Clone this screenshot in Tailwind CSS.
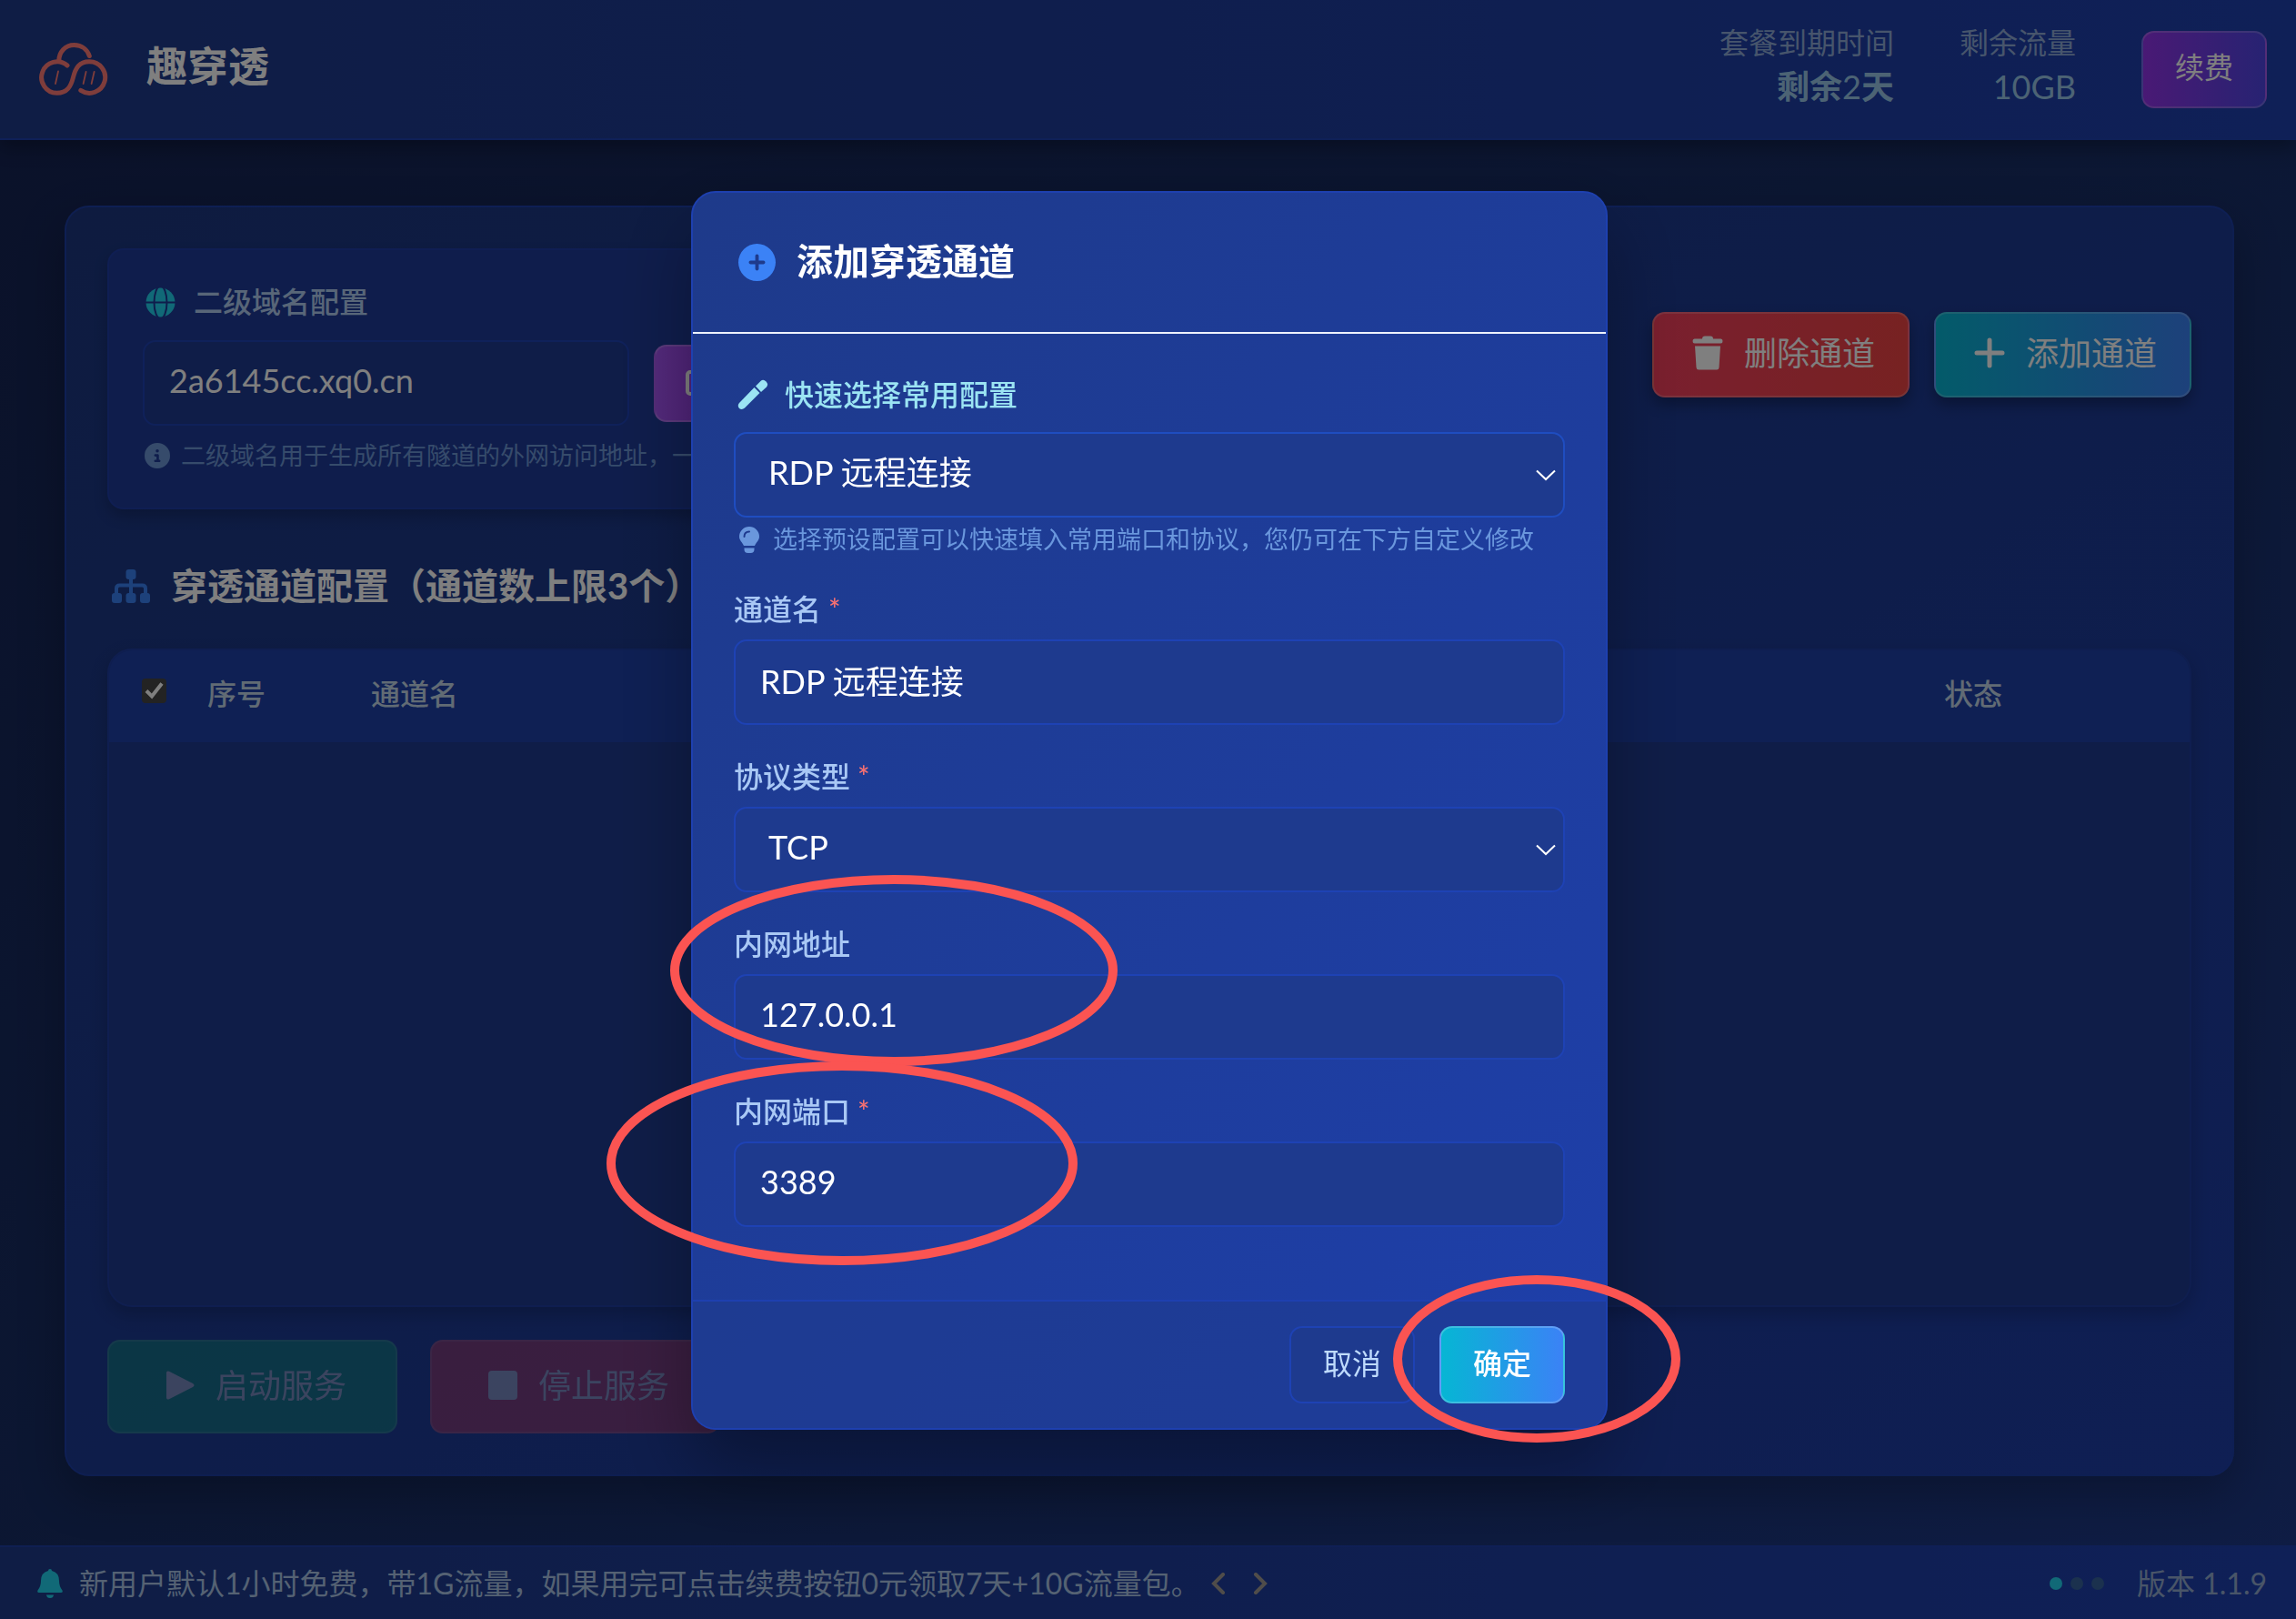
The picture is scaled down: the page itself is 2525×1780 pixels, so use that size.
<!DOCTYPE html>
<html lang="zh-CN">
<head>
    <meta charset="UTF-8">
    <meta name="viewport" content="width=device-width, initial-scale=1.0">
    <title>趣穿透</title>
    <script src="https://cdn.jsdelivr.net/npm/@tailwindcss/browser@4"></script>
</head>
<body class="font-[Lato,'Noto_Sans_CJK_SC',sans-serif] text-white">
<div class="min-h-screen flex flex-col bg-linear-to-br/srgb from-[#152352] via-[#182e66] to-[#1e3a8a]">
    <!-- 顶部栏 -->
    <header class="flex items-center h-[154px] pl-[42px] pr-8 bg-linear-to-r/srgb from-[#1e3a8a] to-[#1e40af] border-b-2 border-[#1e40af] shadow-[0_8px_20px_rgba(0,0,0,0.3)]">
        <svg class="w-[77px] h-[60px]" viewBox="42 46 77 60" fill="none" stroke="#ff7b76" stroke-width="5" stroke-linecap="round" aria-hidden="true">
            <path d="M64.8 67C64.8 57 72 49.6 81.5 49.6C90 49.6 96 54.500 98.300 61.500"/>
            <path d="M74 72A17.200 17.200 0 1 0 62.600 102.300C74 102.300 78 95 80.500 85C83 75 87 67.700 98 67.700A17.300 17.300 0 1 1 88.800 99.400"/>
            <g stroke-width="1.800">
                <path d="M64 78.500L61 92M94.600 79L91.600 92M103.600 79L100.600 92"/>
            </g>
        </svg>
        <h1 class="ml-[42px] pb-1.5 text-[45px] leading-[60px] font-bold">趣穿透</h1>
        <div class="flex items-center gap-[72px] ml-auto text-right">
            <div class="pb-2.5">
                <div class="text-[32px] leading-[48px] text-[#8fabd8]">套餐到期时间</div>
                <div class="text-[36px] leading-[48px] text-[#98c6e8]"><span class="font-bold">剩余</span>2<span class="font-bold">天</span></div>
            </div>
            <div class="pb-2.5">
                <div class="text-[32px] leading-[48px] text-[#8fabd8]">剩余流量</div>
                <div class="text-[36px] leading-[48px] text-[#98c6e8]">10GB</div>
            </div>
            <button class="h-[85px] px-[35px] pb-1 text-[32px] rounded-[14px] border-2 border-white/20 bg-linear-to-r/srgb from-[#9333ea] to-[#4f46e5]">续费</button>
        </div>
    </header>

    <main class="flex-1 flex flex-col pt-[72px] pb-[76px] pl-[71px] pr-[68px]">
        <div class="flex-1 flex flex-col p-[45px] rounded-[27px] border-2 border-[#1e40af]/70 bg-linear-to-br/srgb from-[#1c3780] to-[#1e3ea8] shadow-[0_20px_50px_rgba(0,0,0,0.25)]">
            <div class="flex items-start justify-between">
                <!-- 二级域名 -->
                <section class="w-[1400px] pt-9 pb-[39px] px-[37px] rounded-[18px] border-2 border-[#1e40af]/60 bg-[#1f3b98] shadow-[0_8px_16px_rgba(0,0,0,0.2)]">
                    <label for="domain" class="flex items-center gap-5 pl-[3px] text-[32px] leading-[42px] font-medium text-[#b0cdf0]">
                        <svg class="w-[33px] h-[33px]" viewBox="0 0 33 33" aria-hidden="true">
                            <mask id="globe-cut">
                                <rect width="33" height="33" fill="#fff"/>
                                <path d="M0 16.500H33" stroke="#000" stroke-width="2"/>
                                <ellipse cx="16.500" cy="16.500" rx="7" ry="18" fill="none" stroke="#000" stroke-width="2"/>
                            </mask>
                            <circle cx="16.500" cy="16.500" r="16" fill="#22d3ee" mask="url(#globe-cut)"/>
                        </svg>
                        二级域名配置
                    </label>
                    <div class="flex items-center gap-[27px] mt-[21px]">
                        <input id="domain" type="text" value="2a6145cc.xq0.cn" class="w-[535px] h-[94px] px-[27px] pb-1.5 text-[36px] rounded-[14px] border-2 border-[#1f42b4] bg-[#1e3a90]">
                        <button aria-label="复制" class="h-[85px] px-8 rounded-[14px] border-2 border-white/20 bg-linear-to-r/srgb from-[#a855f7] to-[#9333ea]">
                            <svg class="w-[36px] h-[36px]" viewBox="0 0 36 36" fill="none" stroke="currentColor" stroke-width="4" aria-hidden="true">
                                <rect x="3" y="6" width="19" height="24" rx="3"/>
                                <path d="M28 10V34H10"/>
                            </svg>
                        </button>
                    </div>
                    <p class="flex items-center gap-3 mt-[15px] pl-0.5 text-[27px] leading-9 text-[#6c96d6]">
                        <svg class="w-7 h-7" viewBox="0 0 512 512" fill="currentColor" aria-hidden="true"><path d="M256 512A256 256 0 1 0 256 0a256 256 0 1 0 0 512zM216 336h24V272H216c-13.300 0-24-10.700-24-24s10.700-24 24-24h48c13.300 0 24 10.700 24 24v88h8c13.300 0 24 10.700 24 24s-10.700 24-24 24H216c-13.300 0-24-10.700-24-24s10.700-24 24-24zm40-208a32 32 0 1 1 0 64 32 32 0 1 1 0-64z"/></svg>
                        二级域名用于生成所有隧道的外网访问地址，一
                    </p>
                </section>
                <div class="flex gap-[27px] mt-[70px] text-[36px]">
                    <button class="flex items-center gap-[23px] h-[94px] pl-[42px] pr-9 pb-1 rounded-[14px] border-2 border-white/20 bg-linear-to-r/srgb from-[#f43f5e] to-[#ef4444] shadow-[0_8px_16px_rgba(0,0,0,0.3)]">
                        <svg class="w-[34px] h-[38px]" viewBox="0 0 34 38" fill="currentColor" aria-hidden="true">
                            <path d="M11 3.500Q11 .500 14 .500H20Q23 .500 23 3.500H31.500Q33.500 3.500 33.500 6T31.500 8.500H2.500Q.500 8.500 .500 6T2.500 3.500Z"/>
                            <path d="M3 11.500H31L29.500 35Q29.300 37.500 27 37.500H7Q4.700 37.500 4.500 35Z"/>
                        </svg>
                        删除通道
                    </button>
                    <button class="flex items-center gap-[23px] h-[94px] pl-[42px] pr-9 pb-1 rounded-[14px] border-2 border-white/20 bg-linear-to-r/srgb from-[#06b6d4] to-[#3b82f6] shadow-[0_8px_16px_rgba(0,0,0,0.3)]">
                        <svg class="w-[34px] h-[34px]" viewBox="0 0 34 34" stroke="currentColor" stroke-width="5" stroke-linecap="round" aria-hidden="true"><path d="M17 3V31M3 17H31"/></svg>
                        添加通道
                    </button>
                </div>
            </div>

            <!-- 通道列表 -->
            <h2 class="flex items-center gap-[23px] mt-[60px] pl-[5px] text-[40px] leading-[48px] font-bold">
                <svg class="w-[42px] h-[37px] text-[#3b82f6]" viewBox="0 0 42 37" fill="currentColor" aria-hidden="true">
                    <rect x="15.500" y="0" width="11" height="11" rx="3"/>
                    <rect x="0" y="26" width="11" height="11" rx="3"/>
                    <rect x="15.500" y="26" width="11" height="11" rx="3"/>
                    <rect x="31" y="26" width="11" height="11" rx="3"/>
                    <path d="M21 9V28M5 28V21Q5 17.500 8.500 17.500H33.500Q37 17.500 37 21V28" fill="none" stroke="currentColor" stroke-width="4"/>
                </svg>
                穿透通道配置（通道数上限3个）
            </h2>
            <div class="flex-1 mt-[45px] rounded-[27px] border-2 border-[#1e40af]/50 overflow-hidden bg-[#1f3b90] shadow-[0_8px_20px_rgba(0,0,0,0.2)]">
                <table class="w-full table-fixed text-left text-[32px]">
                    <thead class="h-[101px] bg-[#1e40a8] text-[#c2d6e8]">
                        <tr>
                            <th class="w-[72px] pl-9 pb-3">
                                <span class="grid w-[27px] h-[27px]">
                                    <input type="checkbox" checked aria-label="全选" class="col-start-1 row-start-1 appearance-none w-[27px] h-[27px] rounded-[4px] bg-[#464646]">
                                    <svg class="col-start-1 row-start-1 w-[27px] h-[27px] pointer-events-none" viewBox="0 0 27 27" fill="none" stroke="#fff" stroke-width="4" aria-hidden="true"><path d="M5 13.500L11 19.500L22 5.500"/></svg>
                                </span>
                            </th>
                            <th class="w-[180px] pl-9 pb-1.5 font-medium">序号</th>
                            <th class="pl-9 pb-1.5 font-medium">通道名</th>
                            <th class="w-[306px] pl-9 pb-1.5 font-medium">状态</th>
                        </tr>
                    </thead>
                    <tbody></tbody>
                </table>
            </div>

            <div class="flex gap-9 mt-9 text-[36px]">
                <button disabled class="flex items-center gap-[23px] h-[103px] pl-[62px] pr-[54px] pb-1 rounded-[14px] border-2 border-white/20 bg-[#10b981] opacity-40">
                    <svg class="w-8 h-8" viewBox="0 0 32 32" fill="currentColor" aria-hidden="true"><path d="M1 2.500Q1 -.500 4 .800L30 14Q33 16 30 18L4 31.200Q1 32.500 1 29.500Z"/></svg>
                    启动服务
                </button>
                <button disabled class="flex items-center gap-[23px] h-[103px] pl-[62px] pr-[54px] pb-1 rounded-[14px] border-2 border-white/20 bg-[#f43f5e] opacity-40">
                    <svg class="w-8 h-8" viewBox="0 0 32 32" fill="currentColor" aria-hidden="true"><rect width="32" height="32" rx="4"/></svg>
                    停止服务
                </button>
            </div>
        </div>
    </main>

    <!-- 底部公告 -->
    <footer class="flex items-center h-[81px] pl-[41px] pr-8 border-t-2 border-[#1e40af]/70 bg-linear-to-r/srgb from-[#1e3a8a] to-[#1e40af] text-[32px] text-[#aac4e6]">
        <svg class="w-7 h-8 text-[#22d3ee]" viewBox="0 0 28 32" fill="currentColor" aria-hidden="true">
            <path d="M14 0Q16 0 16 2Q24 4 24 13Q24 19 27.500 23.500Q28.500 26 26 26H2Q-.500 26 .500 23.500Q4 19 4 13Q4 4 12 2Q12 0 14 0Z"/>
            <path d="M10 28.500H18Q17.500 32 14 32T10 28.500Z"/>
        </svg>
        <p class="ml-[18px]">新用户默认1小时免费，带1G流量，如果用完可点击续费按钮0元领取7天+10G流量包。</p>
        <div class="flex gap-[30px] ml-3 text-[#a09a94]">
            <button aria-label="上一条"><svg class="w-4 h-6" viewBox="0 0 16 24" fill="none" stroke="currentColor" stroke-width="4" stroke-linecap="round" aria-hidden="true"><path d="M13 2L3 12L13 22"/></svg></button>
            <button aria-label="下一条"><svg class="w-4 h-6" viewBox="0 0 16 24" fill="none" stroke="currentColor" stroke-width="4" stroke-linecap="round" aria-hidden="true"><path d="M3 2L13 12L3 22"/></svg></button>
        </div>
        <div class="flex gap-[9px] ml-auto">
            <span class="w-3.5 h-3.5 rounded-full bg-[#22d3ee]"></span>
            <span class="w-3.5 h-3.5 rounded-full bg-[#36629c]"></span>
            <span class="w-3.5 h-3.5 rounded-full bg-[#36629c]"></span>
        </div>
        <span class="ml-9 text-[#93abd0]">版本 1.1.9</span>
    </footer>
</div>

<!-- 添加通道弹窗 -->
<div class="fixed inset-0 flex items-center justify-center pl-[3px] pt-0.5 bg-black/50">
    <div role="dialog" aria-labelledby="modal-title" class="relative w-[1008px] rounded-[27px] border-2 border-[#1e40af] bg-linear-to-br/srgb from-[#1e3a8a] to-[#1e3faa] shadow-[0_40px_80px_rgba(0,0,0,0.3)]">
        <div class="flex items-center gap-[23px] h-[155px] pl-[50px] border-b-2 border-[#eef2ff]">
            <svg class="w-[41px] h-[41px] text-[#3b82f6]" viewBox="0 0 512 512" fill="currentColor" aria-hidden="true"><path d="M256 512A256 256 0 1 0 256 0a256 256 0 1 0 0 512zM232 344V280H168c-13.300 0-24-10.700-24-24s10.700-24 24-24h64V168c0-13.300 10.700-24 24-24s24 10.700 24 24v64h64c13.300 0 24 10.700 24 24s-10.700 24-24 24H280v64c0 13.300-10.700 24-24 24s-24-10.700-24-24z"/></svg>
            <h2 id="modal-title" class="pb-1 text-[40px] font-bold">添加穿透通道</h2>
        </div>

        <form class="px-[45px] pt-[45px] pb-20">
            <label for="preset" class="flex items-center gap-[18px] mb-5 pl-1 text-[32px] leading-[43px] font-medium text-[#9be4f3]">
                <svg class="w-[34px] h-[34px]" viewBox="0 0 34 34" fill="currentColor" aria-hidden="true">
                    <path d="M18.500 9L24.500 15L8 31.500Q5 34 2 32Q-.500 29 2 26Z"/>
                    <path d="M20 7.500L25.500 2Q28.500 -.500 31.500 2.500T32 8.500L26 14Z"/>
                </svg>
                快速选择常用配置
            </label>
            <div class="grid items-center">
                <select id="preset" class="col-start-1 row-start-1 appearance-none w-full h-[94px] px-9 pb-1.5 text-[36px] rounded-[14px] border-2 border-[#1f4dc0] bg-[#1e3a8e]">
                    <option>RDP 远程连接</option>
                </select>
                <svg class="col-start-1 row-start-1 justify-self-end mr-2.5 w-[22px] h-[13px] pointer-events-none" viewBox="0 0 22 13" fill="none" stroke="currentColor" stroke-width="2" aria-hidden="true"><path d="M1 1.500L11 11L21 1.500"/></svg>
            </div>
            <p class="flex items-center gap-[15px] mt-1.5 mb-[38px] pl-1.5 text-[27px] leading-9 text-[#6a97dd]">
                <svg class="w-[22px] h-[29px]" viewBox="0 0 22 29" aria-hidden="true">
                    <path fill="currentColor" d="M11 0A11 11 0 0 1 22 11C22 15 18.500 17.500 17 21H5C3.500 17.500 0 15 0 11A11 11 0 0 1 11 0ZM5.500 23.500H16.500V25Q16.500 29 12.500 29H9.500Q5.500 29 5.500 25Z"/>
                    <path d="M5.500 11Q5.500 5.500 11 5.500" fill="none" stroke="#1e3a8f" stroke-width="2" stroke-linecap="round"/>
                </svg>
                选择预设配置可以快速填入常用端口和协议，您仍可在下方自定义修改
            </p>

            <div class="space-y-9">
                <div>
                    <label for="name" class="block mb-3 text-[32px] leading-[42px] font-medium text-[#a9c8f5]">通道名 <span class="text-[#f87171]">*</span></label>
                    <input id="name" type="text" value="RDP 远程连接" class="block w-full h-[94px] px-[27px] pb-1.5 text-[36px] rounded-[14px] border-2 border-[#1e42b4] bg-[#1e3a8e]">
                </div>
                <div>
                    <label for="protocol" class="block mb-3 text-[32px] leading-[42px] font-medium text-[#a9c8f5]">协议类型 <span class="text-[#f87171]">*</span></label>
                    <div class="grid items-center">
                        <select id="protocol" class="col-start-1 row-start-1 appearance-none w-full h-[94px] px-9 pb-1.5 text-[36px] rounded-[14px] border-2 border-[#1e42b4] bg-[#1e3a8e]">
                            <option>TCP</option>
                        </select>
                        <svg class="col-start-1 row-start-1 justify-self-end mr-2.5 w-[22px] h-[13px] pointer-events-none" viewBox="0 0 22 13" fill="none" stroke="currentColor" stroke-width="2" aria-hidden="true"><path d="M1 1.500L11 11L21 1.500"/></svg>
                    </div>
                </div>
                <div>
                    <label for="host" class="block mb-3 text-[32px] leading-[42px] font-medium text-[#a9c8f5]">内网地址</label>
                    <input id="host" type="text" value="127.0.0.1" class="block w-full h-[94px] px-[27px] pb-1.5 text-[36px] rounded-[14px] border-2 border-[#1e42b4] bg-[#1e3a8e]">
                </div>
                <div>
                    <label for="port" class="block mb-3 text-[32px] leading-[42px] font-medium text-[#a9c8f5]">内网端口 <span class="text-[#f87171]">*</span></label>
                    <input id="port" type="text" value="3389" class="block w-full h-[94px] px-[27px] pb-1.5 text-[36px] rounded-[14px] border-2 border-[#1e42b4] bg-[#1e3a8e]">
                </div>
            </div>
        </form>

        <div class="flex justify-end gap-[27px] px-[45px] py-[27px] border-t-2 border-[#1e40af] bg-[#1e3a8a]/50 rounded-b-[25px] text-[32px]">
            <button class="h-[85px] px-[35px] pb-1 rounded-[14px] border-2 border-[#1e42b4] bg-[#1e3a8e] text-[#bfdbfe]">取消</button>
            <button class="h-[85px] px-[35px] pb-1 rounded-[14px] border-2 border-white/20 bg-linear-to-r/srgb from-[#06b6d4] to-[#3b82f6] font-medium">确定</button>
        </div>

        <!-- 操作提示圈 -->
        <svg class="absolute inset-0 w-full h-full overflow-visible pointer-events-none" fill="none" stroke="#fb5452" stroke-width="10" aria-hidden="true">
            <ellipse cx="221" cy="855" rx="241" ry="100"/>
            <ellipse cx="164" cy="1067" rx="254" ry="107"/>
            <ellipse cx="928" cy="1282" rx="153" ry="87"/>
        </svg>
    </div>
</div>
</body>
</html>
